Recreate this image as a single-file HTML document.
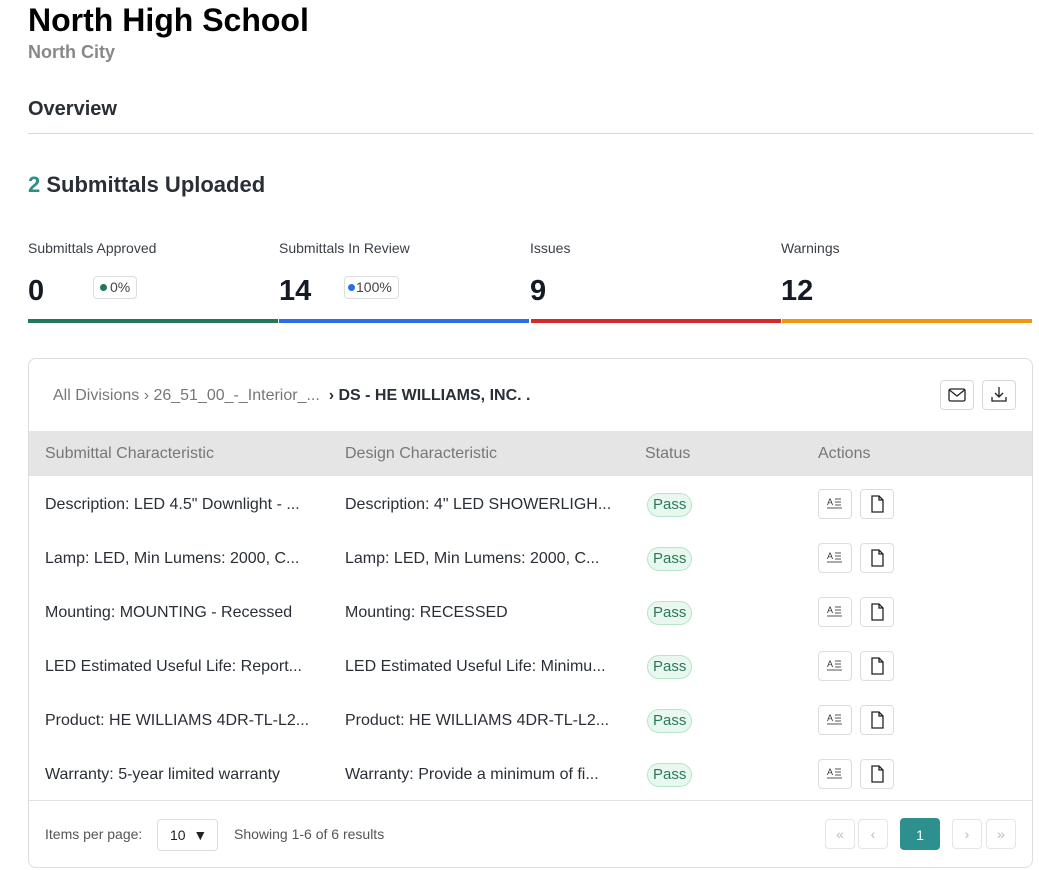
<!DOCTYPE html>
<html><head><meta charset="utf-8"><style>
*{box-sizing:border-box;margin:0;padding:0}
body{width:1039px;height:870px;background:#fff;font-family:"Liberation Sans",sans-serif;color:#1a1f2b;position:relative;overflow:hidden}
.a{position:absolute;white-space:nowrap}
.lbl{font-size:14px;color:#3a3f47}
.num{font-size:29px;font-weight:bold;color:#141a26}
.bar{position:absolute;top:319px;height:4px}
.pill{position:absolute;top:276px;height:23px;border:1px solid #ddd;border-radius:4px;font-size:14px;color:#444;padding:0 6px;line-height:21px}
.dot{display:inline-block;width:7px;height:7px;border-radius:50%;margin-right:3px;vertical-align:1px}
.card{position:absolute;left:28px;top:358px;width:1005px;height:510px;border:1px solid #ddd;border-radius:8px;overflow:hidden}
.ib{position:absolute;width:34px;height:30px;border:1px solid #d8d8d8;border-radius:4px;background:#fff}
.cell{position:absolute;font-size:16px;color:#2a2f37}
.pass{position:absolute;font-size:15px;color:#2a7a5a;background:#e8f8ee;border:1px solid #b6e6c8;border-radius:12px;padding:0 5px;height:24px;line-height:22px}
.sb{position:absolute;width:34px;height:30px;border:1px solid #ddd;border-radius:4px;background:#fff}
.pg{position:absolute;top:819px;width:30px;height:30px;border:1px solid #e5e5e5;border-radius:4px;color:#bbb;font-size:14px;text-align:center;line-height:28px}
</style></head><body>
<div class="a" style="left:28px;top:2px;font-size:32px;font-weight:bold;color:#000">North High School</div>
<div class="a" style="left:28px;top:42px;font-size:18px;font-weight:bold;color:#888">North City</div>
<div class="a" style="left:28px;top:98px;font-size:20px;font-weight:bold;color:#2a2f37">Overview</div>
<div class="a" style="left:28px;top:133px;width:1005px;height:1px;background:#d8d8d8"></div>
<div class="a" style="left:28px;top:172px;font-size:22px;font-weight:bold;color:#2a2f37"><span style="color:#2a8f8a">2</span> Submittals Uploaded</div>

<div class="a lbl" style="left:28px;top:240px">Submittals Approved</div>
<div class="a lbl" style="left:279px;top:240px">Submittals In Review</div>
<div class="a lbl" style="left:530px;top:240px">Issues</div>
<div class="a lbl" style="left:781px;top:240px">Warnings</div>
<div class="a num" style="left:28px;top:275px">0</div>
<div class="a num" style="left:279px;top:275px">14</div>
<div class="a num" style="left:530px;top:275px">9</div>
<div class="a num" style="left:781px;top:275px">12</div>
<div class="pill" style="left:93px"><span class="dot" style="background:#21785a"></span>0%</div>
<div class="pill" style="left:344px;padding-left:3px"><span class="dot" style="background:#2b6de8;margin-right:1px"></span>100%</div>
<div class="bar" style="left:28px;width:250px;background:#21785a"></div>
<div class="bar" style="left:279px;width:250px;background:#2b6de8"></div>
<div class="bar" style="left:531px;width:250px;background:#d42a2a"></div>
<div class="bar" style="left:782px;width:250px;background:#f0960f"></div>

<div class="card">
<div class="a" style="left:24px;top:28px;font-size:16px;color:#777">All Divisions › 26_51_00_-_Interior_... <span style="color:#2a2f37;font-weight:bold">&nbsp;› DS - HE WILLIAMS, INC. .</span></div>
<div class="ib" style="left:911px;top:21px"><svg width="32" height="28" viewBox="0 0 32 28"><rect x="8" y="8" width="16" height="12" rx="1.5" fill="none" stroke="#222" stroke-width="1.3"/><path d="M8.5 9l7.5 6 7.5-6" fill="none" stroke="#222" stroke-width="1.3"/></svg></div>
<div class="ib" style="left:953px;top:21px"><svg width="32" height="28" viewBox="0 0 32 28"><path d="M16 6v10M12 12l4 4 4-4M9 16v4h14v-4" fill="none" stroke="#222" stroke-width="1.3"/></svg></div>
<div class="a" style="left:0;top:72px;width:1005px;height:45px;background:#e5e5e5"></div>
<div class="a" style="left:16px;top:86px;font-size:16px;color:#777">Submittal Characteristic</div>
<div class="a" style="left:316px;top:86px;font-size:16px;color:#777">Design Characteristic</div>
<div class="a" style="left:616px;top:86px;font-size:16px;color:#777">Status</div>
<div class="a" style="left:789px;top:86px;font-size:16px;color:#777">Actions</div>
<div class="a" style="left:0;top:441px;width:1005px;height:1px;background:#e2e2e2"></div>
<div class="a" style="left:16px;top:467px;font-size:14px;color:#555">Items per page:</div>
<div class="a" style="left:128px;top:460px;width:61px;height:32px;border:1px solid #ddd;border-radius:4px;font-size:14px;padding:7px 12px;color:#222">10 &nbsp;▼</div>
<div class="a" style="left:205px;top:467px;font-size:14px;color:#555">Showing 1-6 of 6 results</div>
</div>

<div id="rows"></div>
<div class="pg" style="left:825px">«</div>
<div class="pg" style="left:858px">‹</div>
<div class="pg" style="left:900px;width:40px;height:32px;top:818px;background:#2d8f8e;border-color:#2d8f8e;color:#fff;line-height:32px">1</div>
<div class="pg" style="left:952px">›</div>
<div class="pg" style="left:986px">»</div>

<script>
var d=[["Description: LED 4.5\" Downlight - ...","Description: 4\" LED SHOWERLIGH..."],["Lamp: LED, Min Lumens: 2000, C...","Lamp: LED, Min Lumens: 2000, C..."],["Mounting: MOUNTING - Recessed","Mounting: RECESSED"],["LED Estimated Useful Life: Report...","LED Estimated Useful Life: Minimu..."],["Product: HE WILLIAMS 4DR-TL-L2...","Product: HE WILLIAMS 4DR-TL-L2..."],["Warranty: 5-year limited warranty","Warranty: Provide a minimum of fi..."]];
var h="";
d.forEach(function(r,i){var y=504+i*54;
h+='<div class="a cell" style="left:45px;top:'+(y-8)+'px">'+r[0]+'</div><div class="a cell" style="left:345px;top:'+(y-8)+'px">'+r[1]+'</div><div class="pass" style="left:647px;top:'+(y-11)+'px">Pass</div>';
h+='<div class="sb" style="left:818px;top:'+(y-15)+'px"><svg width="32" height="28" viewBox="0 0 32 28"><text x="8" y="15" font-size="9" font-family="Liberation Sans" fill="#333">A</text><path d="M16 9h6M16 12h6M16 15h6M8 18h15" stroke="#555" stroke-width="1"/></svg></div>';
h+='<div class="sb" style="left:860px;top:'+(y-15)+'px"><svg width="32" height="28" viewBox="0 0 32 28"><path d="M11 6h7l4 4v12h-11z M18 6v4h4" fill="none" stroke="#222" stroke-width="1.3"/></svg></div>';});
document.getElementById("rows").innerHTML=h;
</script>
</body></html>
